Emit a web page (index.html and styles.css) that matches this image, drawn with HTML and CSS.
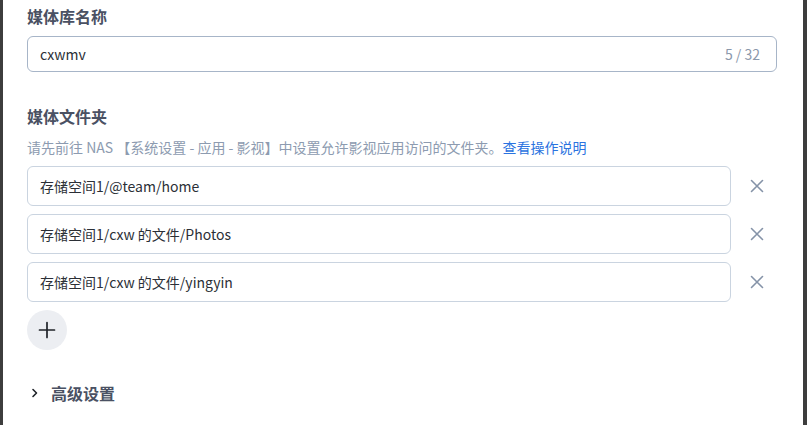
FILE: index.html
```html
<!DOCTYPE html>
<html lang="zh">
<head>
<meta charset="utf-8">
<link rel="stylesheet" href="styles.css">
</head>
<body>
<div class="frame">
  <div class="content">
    <h3 class="label">媒体库名称</h3>
    <div class="field name-field">
      <span class="value">cxwmv</span>
      <span class="counter">5 / 32</span>
    </div>

    <h3 class="label folders-label">媒体文件夹</h3>
    <p class="hint">请先前往 NAS 【系统设置 - 应用 - 影视】中设置允许影视应用访问的文件夹。<a class="link" href="#">查看操作说明</a></p>

    <div class="folder-list">
      <div class="folder-row">
        <div class="field folder-field"><span class="value">存储空间1/@team/home</span></div>
        <button class="remove" aria-label="删除"><svg width="14" height="14" viewBox="0 0 14 14"><path d="M1.5 1.5L12.5 12.5M12.5 1.5L1.5 12.5" stroke="#8593a8" stroke-width="1.6" stroke-linecap="round" fill="none"/></svg></button>
      </div>
      <div class="folder-row">
        <div class="field folder-field"><span class="value">存储空间1/cxw 的文件/Photos</span></div>
        <button class="remove" aria-label="删除"><svg width="14" height="14" viewBox="0 0 14 14"><path d="M1.5 1.5L12.5 12.5M12.5 1.5L1.5 12.5" stroke="#8593a8" stroke-width="1.6" stroke-linecap="round" fill="none"/></svg></button>
      </div>
      <div class="folder-row">
        <div class="field folder-field"><span class="value">存储空间1/cxw 的文件/yingyin</span></div>
        <button class="remove" aria-label="删除"><svg width="14" height="14" viewBox="0 0 14 14"><path d="M1.5 1.5L12.5 12.5M12.5 1.5L1.5 12.5" stroke="#8593a8" stroke-width="1.6" stroke-linecap="round" fill="none"/></svg></button>
      </div>
      <button class="add" aria-label="添加"><svg width="18" height="18" viewBox="0 0 18 18"><path d="M9 1.5V16.5M1.5 9H16.5" stroke="#1f2329" stroke-width="1.7" stroke-linecap="round" fill="none"/></svg></button>
    </div>

    <div class="advanced">
      <svg class="chev" width="8" height="10" viewBox="0 0 8 10"><path d="M2 1.5L5.5 5L2 8.5" stroke="#1f2329" stroke-width="1.6" fill="none" stroke-linecap="round" stroke-linejoin="round"/></svg>
      <span class="adv-text">高级设置</span>
    </div>
  </div>
</div>
</body>
</html>
```

FILE: styles.css
```css
html, body {
  margin: 0;
  padding: 0;
  background: #ffffff;
}
body {
  font-family: "Noto Sans CJK SC", "Noto Sans", sans-serif;
  color: #2b2f36;
}
.frame {
  height: 425px;
  border-left: 3px solid #3d3d3d;
  border-right: 4px solid #3d3d3d;
  box-sizing: border-box;
  overflow: hidden;
}
.content {
  padding: 4px 26px 0 24px;
}
.label {
  margin: 0;
  font-size: 16px;
  line-height: 24px;
  font-weight: 700;
  color: #4a5163;
}
.folders-label {
  margin-top: 32px;
}
.field {
  box-sizing: border-box;
  display: flex;
  align-items: center;
  border-radius: 6px;
  padding: 0 12px;
  font-size: 14px;
  color: #2b2f36;
}
.name-field {
  margin-top: 8px;
  height: 36px;
  border: 1px solid #a7b5c8;
  justify-content: space-between;
}
.counter {
  color: #8b98ab;
  font-size: 14px;
  padding-right: 4px;
}
.hint {
  margin: 9px 0 0;
  font-size: 14px;
  line-height: 20px;
  color: #8d9bb0;
}
.link {
  color: #2a73e0;
  text-decoration: none;
}
.folder-list {
  margin-top: 9px;
  display: flex;
  flex-direction: column;
  gap: 8px;
  align-items: flex-start;
}
.folder-row {
  display: flex;
  align-items: center;
  width: 100%;
}
.folder-field {
  flex: 1;
  height: 40px;
  border: 1px solid #cad4e0;
}
.remove {
  width: 46px;
  height: 40px;
  border: 0;
  background: transparent;
  padding: 0 0 0 6px;
  display: flex;
  align-items: center;
  justify-content: center;
}
.add {
  width: 40px;
  height: 40px;
  border-radius: 50%;
  border: 0;
  background: #eceef2;
  display: flex;
  align-items: center;
  justify-content: center;
  padding: 0;
}
.advanced {
  margin-top: 31px;
  display: flex;
  align-items: center;
  height: 24px;
}
.chev {
  margin-left: 4px;
  margin-right: 12px;
}
.adv-text {
  font-size: 16px;
  font-weight: 700;
  color: #4a5163;
}
```
